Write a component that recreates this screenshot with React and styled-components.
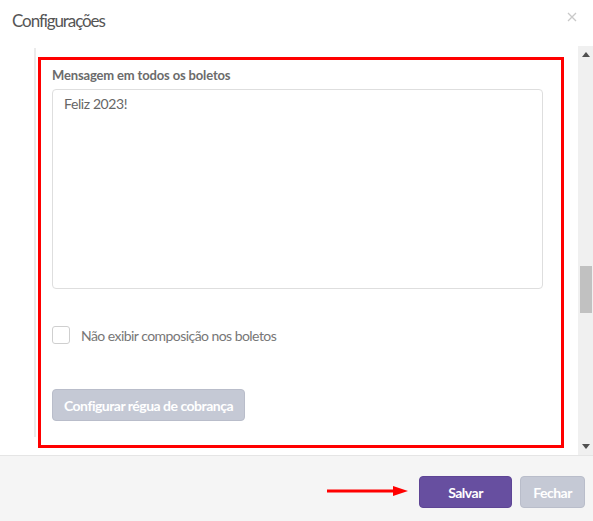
import React from 'react';
import styled, { createGlobalStyle } from 'styled-components';

const GlobalStyle = createGlobalStyle`
  html, body {
    margin: 0;
    padding: 0;
    background: #fff;
    font-family: Lato, "Open Sans", sans-serif;
  }
`;

const Modal = styled.div`
  width: 593px;
  height: 521px;
  display: flex;
  flex-direction: column;
  background: #fff;
`;

const Header = styled.div`
  height: 46px;
  display: flex;
  align-items: flex-start;
  justify-content: space-between;
  padding: 0 16px 0 12px;
  box-sizing: border-box;
`;

const Title = styled.h4`
  margin: 10px 0 0;
  font-size: 17px;
  font-weight: 400;
  letter-spacing: -1.1px;
  color: #555;
  line-height: 22px;
`;

const Close = styled.button`
  margin-top: 12px;
  padding: 0;
  border: none;
  background: none;
  display: flex;
  cursor: pointer;
`;

const Body = styled.div`
  flex: 1;
  display: flex;
  min-height: 0;
`;

const Scroller = styled.div`
  flex: 1;
  position: relative;
`;

const Panel = styled.div`
  margin: 2px 0 0 34px;
  height: 389px;
  border-left: 2px solid #ebebeb;
  padding: 18px 0 0 16px;
  box-sizing: border-box;
  display: flex;
  flex-direction: column;
  align-items: flex-start;
`;

const Label = styled.label`
  font-size: 13px;
  font-weight: 700;
  letter-spacing: -0.15px;
  color: #6b6b6b;
  line-height: 18px;
`;

const TextArea = styled.textarea`
  margin-top: 5px;
  width: 491px;
  height: 200px;
  box-sizing: border-box;
  border: 1px solid #dedede;
  border-radius: 4px;
  padding: 5px 11px;
  font-family: Lato, sans-serif;
  font-size: 14px;
  letter-spacing: -0.4px;
  color: #666;
  resize: none;
  outline: none;
`;

const CheckRow = styled.label`
  margin-top: 37px;
  display: flex;
  align-items: center;
  gap: 11px;
  font-size: 14px;
  letter-spacing: -0.55px;
  color: #777;
`;

const Box = styled.span`
  width: 18px;
  height: 18px;
  box-sizing: border-box;
  border: 1px solid #cfcfcf;
  border-radius: 3px;
  background: #fff;
`;

const Button = styled.button`
  height: 32px;
  padding: 0;
  border-radius: 4px;
  border: 1px solid ${(p) => (p.$primary ? '#5e4595' : '#b9bdca')};
  background: ${(p) => (p.$primary ? '#674fa0' : '#c5c9d5')};
  color: #fff;
  font-family: Lato, sans-serif;
  font-size: 14px;
  font-weight: 700;
  letter-spacing: -0.5px;
  white-space: nowrap;
  cursor: pointer;
  width: ${(p) => p.$w}px;
`;

const RuleButton = styled(Button)`
  margin-top: 45px;
`;

const Highlight = styled.div`
  position: absolute;
  left: 38px;
  top: 11px;
  width: 526px;
  height: 391px;
  box-sizing: border-box;
  border: 3px solid #ff0000;
  pointer-events: none;
`;

const ScrollBar = styled.div`
  width: 15px;
  background: #f0f0f0;
  display: flex;
  flex-direction: column;
  align-items: center;
`;

const Arrow = styled.div`
  height: 17px;
  display: flex;
  align-items: center;
  justify-content: center;
`;

const Track = styled.div`
  flex: 1;
  width: 100%;
  display: flex;
  justify-content: center;
`;

const Thumb = styled.div`
  width: 12px;
  height: 47px;
  background: #c1c1c1;
`;

const Footer = styled.div`
  height: 66px;
  border-top: 1px solid #e5e5e5;
  background: #f5f5f5;
  box-sizing: border-box;
  display: flex;
  align-items: flex-start;
  justify-content: flex-end;
  gap: 8px;
  padding: 20px 8px 0 0;
`;

const Pointer = styled.svg`
  margin: 9px 3px 0 0;
`;

export default function App() {
  return (
    <Modal>
      <GlobalStyle />
      <Header>
        <Title>Configurações</Title>
        <Close aria-label="Fechar">
          <svg width="10" height="10" viewBox="0 0 10 10">
            <path d="M1 1 L9 9 M9 1 L1 9" stroke="#c9c9c9" strokeWidth="1.3" />
          </svg>
        </Close>
      </Header>
      <Body>
        <Scroller>
          <Panel>
            <Label>Mensagem em todos os boletos</Label>
            <TextArea defaultValue="Feliz 2023!" />
            <CheckRow>
              <Box />
              Não exibir composição nos boletos
            </CheckRow>
            <RuleButton $w={193}>Configurar régua de cobrança</RuleButton>
          </Panel>
          <Highlight />
        </Scroller>
        <ScrollBar>
          <Arrow>
            <svg width="8" height="5" viewBox="0 0 8 5"><path d="M0 5 L4 0 L8 5 Z" fill="#505050" /></svg>
          </Arrow>
          <Track>
            <Thumb style={{ marginTop: 203 }} />
          </Track>
          <Arrow>
            <svg width="8" height="5" viewBox="0 0 8 5"><path d="M0 0 L4 5 L8 0 Z" fill="#505050" /></svg>
          </Arrow>
        </ScrollBar>
      </Body>
      <Footer>
        <Pointer width="81" height="12" viewBox="0 0 81 12">
          <path d="M0 6 L68 6" stroke="#ff0000" strokeWidth="3" />
          <path d="M66 1 L81 6 L66 11 Z" fill="#ff0000" />
        </Pointer>
        <Button $primary $w={93}>Salvar</Button>
        <Button $w={65}>Fechar</Button>
      </Footer>
    </Modal>
  );
}
